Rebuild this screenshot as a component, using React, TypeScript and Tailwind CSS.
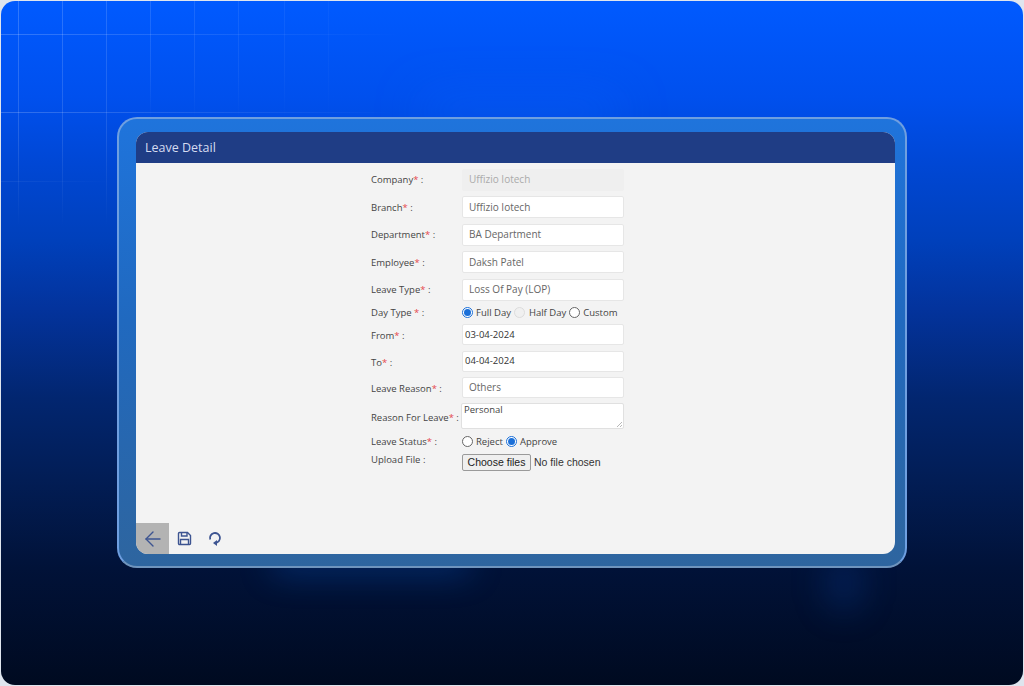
import React from 'react';
import { ArrowLeft } from 'lucide-react';

const gridX = [17, 61, 105, 149, 193, 237, 283, 327];
const gridY = [33, 111, 180];

const Req = () => <span className="text-[#e5484d]">*</span>;

const FormRow = ({ label, star = ' :', h = 'h-[27.5px]', lp = 'pt-[1px]', children }: { label: string; star?: string; h?: string; lp?: string; children: React.ReactNode }) => (
  <div className={`flex items-center ${h}`}>
    <label className={`w-[91px] shrink-0 text-[9.5px] text-[#444] whitespace-nowrap ${lp}`}>
      {label}
      <Req />
      {star}
    </label>
    {children}
  </div>
);

const TextBox = ({ value, disabled, pad = 'pl-[6px]', text = 'text-[10px] text-[#666]', h = 'h-[22px]' }: { value: string; disabled?: boolean; pad?: string; text?: string; h?: string }) => (
  <div className={`w-[162px] ${h} flex items-center rounded-[2px] ${pad} ${text} ${disabled ? 'bg-[#efefef] !text-[#aaa] pl-[7px]' : 'bg-white border border-[#e6e6e6]'}`}>
    {value}
  </div>
);

const Radio = ({ checked, faded }: { checked?: boolean; faded?: boolean }) => (
  <span className={`w-[11px] h-[11px] rounded-full border flex items-center justify-center shrink-0 ${checked ? 'border-[#1a6fd8] bg-white' : faded ? 'border-[#dcdcdc] bg-[#f0f0f0]' : 'border-[#666] bg-white'}`}>
    {checked && <span className="w-[7px] h-[7px] rounded-full bg-[#1a6fd8]" />}
  </span>
);

const RadioText = ({ ml, children }: { ml: string; children: React.ReactNode }) => (
  <span className={`text-[9.5px] leading-[11px] text-[#444] ${ml}`}>{children}</span>
);

const RadioBox = ({ ml, checked, faded }: { ml: string; checked?: boolean; faded?: boolean }) => (
  <span className={`flex ${ml}`}>
    <Radio checked={checked} faded={faded} />
  </span>
);

export default function App() {
  return (
    <div className="w-[1024px] h-[686px] bg-[#dfe5ee] p-px overflow-hidden font-['Open_Sans',sans-serif]">
      <div className="relative w-full h-full rounded-[14px] overflow-hidden bg-[linear-gradient(180deg,#005aff_0%,#0050ee_14%,#0047d4_24%,#0040bb_35%,#03339c_45%,#022670_58%,#021d55_70%,#011238_83%,#000a20_100%)] pl-[116px] pt-[116px]">
        <svg className="absolute left-0 top-0" width="420" height="240" aria-hidden="true">
          <defs>
            <linearGradient id="fadeX" x1="0" x2="1" y1="0" y2="0">
              <stop offset="0" stopColor="#fff" stopOpacity="0.2" />
              <stop offset="1" stopColor="#fff" stopOpacity="0" />
            </linearGradient>
            <linearGradient id="fadeY" x1="0" x2="0" y1="0" y2="1">
              <stop offset="0" stopColor="#fff" stopOpacity="0.2" />
              <stop offset="0.6" stopColor="#fff" stopOpacity="0.14" />
              <stop offset="1" stopColor="#fff" stopOpacity="0" />
            </linearGradient>
          </defs>
          {gridX.map((x) => (
            <rect key={x} x={x} y={0} width={1} height={x < 110 ? 225 : 118} fill="url(#fadeY)" opacity={1 - x / 400} />
          ))}
          {gridY.map((y) => (
            <rect key={y} x={0} y={y} width={y === 180 ? 110 : 400} height={1} fill="url(#fadeX)" opacity={y === 180 ? 0.3 : 1} />
          ))}
        </svg>
        <div className="absolute left-[270px] w-[200px] top-[552px] h-[20px] rounded-full bg-[#0a5ccc]/40 blur-lg" />
        <div className="absolute left-[825px] w-[36px] top-[555px] h-[55px] rounded-full bg-[#0a3f99]/30 blur-lg" />
        <div className="absolute left-[420px] w-[200px] top-[100px] h-[20px] rounded-full bg-[#0a66ff]/50 blur-xl" />

        <div className="relative w-[790px] h-[451px] rounded-[20px] border-2 border-[#6f9fe0] border-b-[#6f94bd] bg-[linear-gradient(180deg,#1f74dc_0%,#2069bf_45%,#2e659f_100%)] pt-[13px] pl-[17px] pr-[10px]">
          <div className="h-[422px] rounded-[12px] overflow-hidden bg-[#f3f3f3] flex flex-col">
            <div className="h-[31px] shrink-0 bg-[#1f3d85] flex items-center pl-[9px] pt-[2px] text-[12.5px] text-[#d5dcf0]">
              Leave Detail
            </div>

            <div className="flex-1 pl-[235px] pt-[3px]">
              <FormRow label="Company"><TextBox value="Uffizio Iotech" disabled /></FormRow>
              <FormRow label="Branch"><TextBox value="Uffizio Iotech" /></FormRow>
              <FormRow label="Department"><TextBox value="BA Department" /></FormRow>
              <FormRow label="Employee"><TextBox value="Daksh Patel" /></FormRow>
              <FormRow label="Leave Type"><TextBox value="Loss Of Pay (LOP)" /></FormRow>
              <FormRow label="Day Type " h="h-[18px]" lp="pt-[2px]">
                <div className="flex items-center">
                  <Radio checked />
                  <RadioText ml="ml-[3px]">Full Day</RadioText>
                  <RadioBox ml="ml-[3px]" faded />
                  <RadioText ml="ml-[4px]">Half Day</RadioText>
                  <RadioBox ml="ml-[3px]" />
                  <RadioText ml="ml-[3px]">Custom</RadioText>
                </div>
              </FormRow>
              <FormRow label="From" h="h-[26.5px]" lp="pt-[3px]"><TextBox value="03-04-2024" h="h-[21px]" pad="pl-[2px]" text="text-[9.5px] text-[#333]" /></FormRow>
              <FormRow label="To" h="h-[26.5px]" lp="pt-[3px]"><TextBox value="04-04-2024" h="h-[21px]" pad="pl-[2px]" text="text-[9.5px] text-[#333]" /></FormRow>
              <FormRow label="Leave Reason" h="h-[26.5px]" lp="pt-[3px]"><TextBox value="Others" h="h-[21px]" /></FormRow>
              <FormRow label="Reason For Leave" h="h-[30px]" lp="pt-[4px]">
                <div className="relative w-[163px] h-[26px] -ml-px bg-white border border-[#e0e0e0] rounded-[2px] pl-[2px] text-[9.5px] leading-[11px] text-[#444]">
                  Personal
                  <svg className="absolute right-px bottom-px" width="5" height="5" aria-hidden="true">
                    <path d="M0 5 L5 0 M3 5 L5 3" stroke="#999" strokeWidth="0.7" />
                  </svg>
                </div>
              </FormRow>
              <FormRow label="Leave Status" h="h-[20px]" lp="pt-[3px]">
                <div className="flex items-center">
                  <Radio />
                  <RadioText ml="ml-[3px]">Reject</RadioText>
                  <RadioBox ml="ml-[3px]" checked />
                  <RadioText ml="ml-[3px]">Approve</RadioText>
                </div>
              </FormRow>
              <div className="flex items-start h-[24px]">
                <label className="w-[91px] shrink-0 text-[9.5px] text-[#444] leading-[14px] pt-[2px]">Upload File :</label>
                <div className="flex items-center pt-[3px]">
                  <span className="w-[69px] h-[17px] flex items-center justify-center border border-[#9a9a9a] rounded-[2px] bg-[#efefef] font-['Liberation_Sans',sans-serif] text-[10.5px] text-[#222]">
                    Choose files
                  </span>
                  <span className="ml-[3px] font-['Liberation_Sans',sans-serif] text-[10.5px] text-[#333]">No file chosen</span>
                </div>
              </div>
            </div>

            <div className="h-[31px] shrink-0 flex items-center text-[#3d5491]">
              <div className="w-[33px] h-full bg-[#b3b3b3] flex items-center justify-center">
                <ArrowLeft size={24} strokeWidth={1.4} />
              </div>
              <div className="w-[30px] flex justify-center">
                <svg width="15" height="15" viewBox="0 0 15 15" fill="none" stroke="currentColor" strokeWidth="1.4" aria-hidden="true">
                  <path d="M1.5 2.5a1 1 0 0 1 1-1h8l3 3v8a1 1 0 0 1-1 1h-10a1 1 0 0 1-1-1z" />
                  <path d="M4.5 1.5v3.5h5.5v-3.5" />
                  <path d="M3.5 13.5v-5h8v5" />
                </svg>
              </div>
              <div className="w-[31px] flex justify-center">
                <svg width="14" height="15" viewBox="0 0 14 15" fill="none" aria-hidden="true">
                  <path d="M2.2 8.5A5 5 0 1 1 7.5 12" stroke="currentColor" strokeWidth="1.8" />
                  <path d="M9 9L5 12l4 3z" fill="currentColor" />
                </svg>
              </div>
            </div>
          </div>
        </div>
      </div>
    </div>
  );
}
